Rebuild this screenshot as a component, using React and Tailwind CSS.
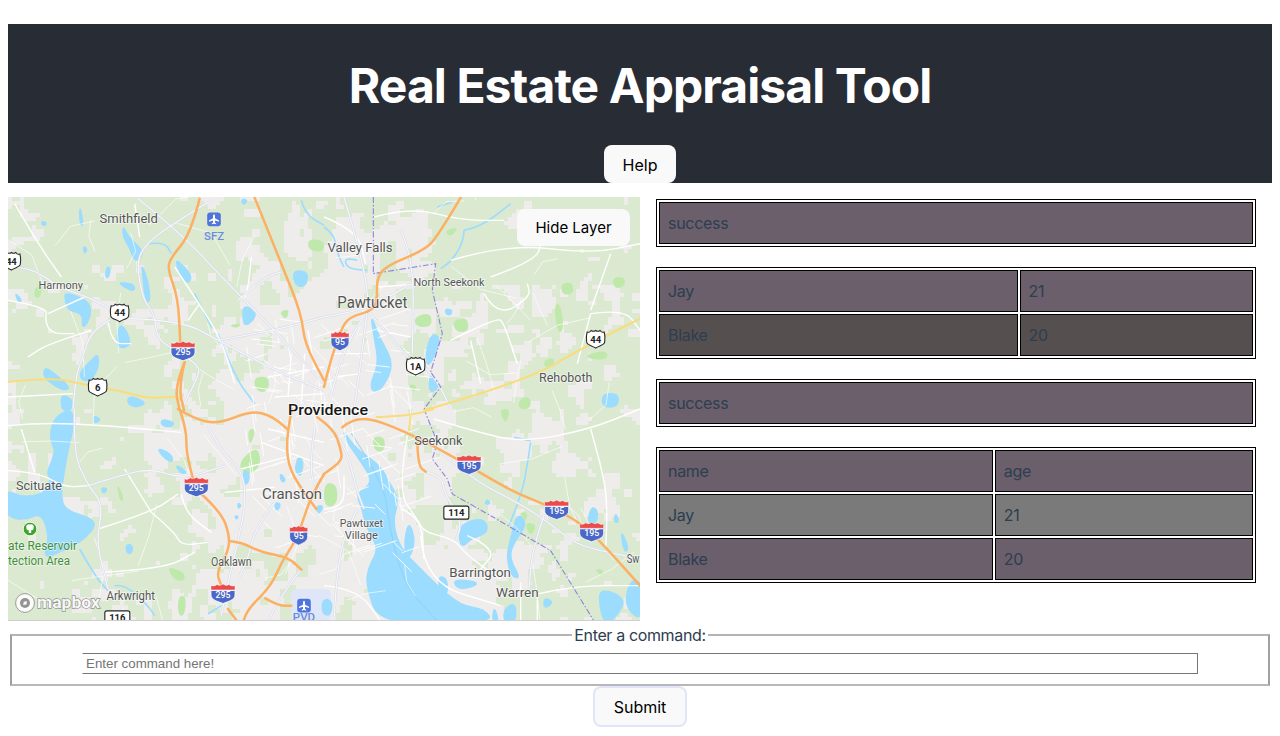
import React from "react";

const O = { a: [0, 0], b: [316, 0], c: [0, 212], d: [316, 212] };
const pts = (q, p) => p.map(([x, y]) => [O[q][0] + x / 3, O[q][1] + y / 3]);
function smooth(points, closed) {
  const n = points.length;
  if (n < 3) return "M" + points.map((p) => p.join(",")).join("L");
  let d = "";
  if (closed) {
    const m = (a, b) => [(a[0] + b[0]) / 2, (a[1] + b[1]) / 2];
    const s = m(points[n - 1], points[0]);
    d = `M${s[0]},${s[1]}`;
    for (let i = 0; i < n; i++) {
      const e = m(points[i], points[(i + 1) % n]);
      d += `Q${points[i][0]},${points[i][1]} ${e[0]},${e[1]}`;
    }
    return d + "Z";
  }
  d = `M${points[0][0]},${points[0][1]}`;
  for (let i = 1; i < n - 1; i++) {
    const ex = (points[i][0] + points[i + 1][0]) / 2;
    const ey = (points[i][1] + points[i + 1][1]) / 2;
    d += `Q${points[i][0]},${points[i][1]} ${ex},${ey}`;
  }
  d += `L${points[n - 1][0]},${points[n - 1][1]}`;
  return d;
}
const ln = (q, p) => smooth(pts(q, p), false);
const blob = (q, p) => smooth(pts(q, p), true);

function hash(x, y) {
  const s = Math.sin(x * 127.1 + y * 311.7) * 43758.5453;
  return s - Math.floor(s);
}
function vn(x, y, size) {
  const gx = x / size, gy = y / size;
  const ix = Math.floor(gx), iy = Math.floor(gy);
  const fx = gx - ix, fy = gy - iy;
  const u = fx * fx * (3 - 2 * fx), v = fy * fy * (3 - 2 * fy);
  const a = hash(ix, iy), b = hash(ix + 1, iy), c = hash(ix, iy + 1), e = hash(ix + 1, iy + 1);
  return a + (b - a) * u + (c - a) * v + (a - b - c + e) * u * v;
}
function greenPath() {
  let d = "";
  const cell = 4;
  for (let y = 0; y < 424; y += cell) {
    let start = -1;
    for (let x = 0; x <= 632; x += cell) {
      const city = Math.exp(-(((x - 325) / 105) ** 2 + ((y - 200) / 170) ** 2));
      const low = Math.exp(-(((x - 430) / 130) ** 2 + ((y - 400) / 100) ** 2));
      const mid = Math.exp(-(((x - 215) / 70) ** 2 + ((y - 330) / 100) ** 2));
      const t = 0.32 + 0.55 * city + 0.3 * low + 0.2 * mid;
      const n = 0.55 * vn(x, y, 24) + 0.45 * vn(x + 500, y + 300, 9);
      const on = x < 632 && n > t;
      if (on && start < 0) start = x;
      if (!on && start >= 0) {
        d += `M${start} ${y}H${x}V${y + cell}H${start}Z`;
        start = -1;
      }
    }
  }
  return d;
}
const GREEN = greenPath();

function streetPaths() {
  let city = "";
  for (let i = 0; i < 120; i++) {
    const r1 = hash(i, 1), r2 = hash(i, 2), r3 = hash(i, 3), r4 = hash(i, 4);
    const x = 235 + r1 * 165;
    const y = 120 + r2 * 240;
    const dirs = [[1, 0.12], [0.15, 1], [1, -0.35], [0.7, 0.7]];
    const dr = dirs[Math.floor(r3 * 4)];
    const L = 12 + r4 * 24;
    city += `M${x} ${y}L${x + dr[0] * L} ${y + dr[1] * L}`;
  }
  let outer = "";
  for (let i = 0; i < 60; i++) {
    const x = hash(i, 5) * 632, y = hash(i, 6) * 424;
    const a = hash(i, 7) * 6.28, L = 14 + hash(i, 8) * 24;
    const mx = x + Math.cos(a) * L, my = y + Math.sin(a) * L;
    const b = a + (hash(i, 9) - 0.5) * 1.6;
    outer += `M${x} ${y}L${mx} ${my}L${mx + Math.cos(b) * L} ${my + Math.sin(b) * L}`;
  }
  return { city, outer };
}
const STREETS = streetPaths();

const parks = [
  ["a", [[735, 540], [785, 538], [780, 585], [745, 585]]],
  ["a", [[812, 345], [845, 335], [835, 370]]],
  ["a", [[900, 125], [948, 130], [948, 165], [900, 160]]],
  ["a", [[660, 385], [700, 378], [690, 395]]],
  ["a", [[80, 270], [105, 265], [95, 305], [78, 300]]],
  ["b", [[360, 100], [405, 90], [380, 122]]],
  ["b", [[270, 360], [320, 345], [325, 390], [275, 390]]],
  ["b", [[385, 370], [430, 360], [435, 405], [395, 405]]],
  ["b", [[690, 320], [710, 320], [720, 400], [700, 410]]],
  ["b", [[710, 260], [745, 255], [750, 290], [715, 295]]],
  ["b", [[790, 470], [850, 460], [850, 490], [790, 485]]],
  ["b", [[590, 600], [620, 600], [620, 636], [580, 636]]],
  ["b", [[865, 240], [905, 240], [900, 270], [870, 275]]],
  ["b", [[660, 490], [690, 480], [690, 510], [660, 510]]],
  ["b", [[250, 560], [280, 565], [270, 590]]],
  ["c", [[325, 215], [350, 270], [335, 280]]],
  ["c", [[700, 150], [750, 110], [760, 170], [720, 200], [695, 180]]],
  ["c", [[475, 470], [530, 490], [530, 515], [500, 515]]],
  ["c", [[718, 60], [745, 60], [725, 115]]],
  ["c", [[510, 560], [535, 560], [530, 620], [510, 620]]],
  ["d", [[145, 80], [185, 85], [180, 130], [150, 125]]],
  ["d", [[600, 340], [640, 345], [620, 385]]],
  ["d", [[585, 310], [612, 310], [605, 340]]],
  ["d", [[810, 480], [838, 480], [835, 505]]],
  ["d", [[525, 0], [560, 0], [545, 50]]],
  ["d", [[0, 220], [40, 225], [40, 290], [0, 295]]],
];

const water = [
  ["a", [[345, 85], [360, 120], [395, 150], [405, 175], [380, 195], [365, 150], [345, 120]]],
  ["a", [[215, 20], [226, 85], [216, 85]]],
  ["a", [[500, 185], [530, 210], [552, 240], [540, 260], [520, 240]]],
  ["a", [[400, 200], [420, 250], [427, 315], [412, 310], [405, 240]]],
  ["a", [[170, 285], [240, 310], [250, 345], [235, 385], [222, 390], [225, 350], [180, 340], [172, 310]]],
  ["a", [[335, 380], [355, 400], [370, 445], [335, 455], [325, 430]]],
  ["a", [[270, 470], [272, 510], [250, 550], [220, 550], [215, 525], [250, 490]]],
  ["a", [[110, 510], [140, 530], [190, 575], [160, 580], [105, 540]]],
  ["a", [[160, 590], [195, 610], [190, 640], [160, 640]]],
  ["a", [[360, 595], [415, 615], [395, 630], [360, 625]]],
  ["a", [[860, 220], [900, 225], [895, 265], [870, 270], [855, 245]]],
  ["a", [[705, 320], [750, 350], [720, 385], [705, 380]]],
  ["a", [[225, 148], [238, 155], [230, 172]]],
  ["a", [[298, 208], [308, 215], [300, 245], [292, 235]]],
  ["a", [[335, 255], [380, 262], [378, 285], [340, 265]]],
  ["a", [[20, 285], [42, 310], [32, 318]]],
  ["a", [[100, 72], [118, 78], [105, 88]]],
  ["a", [[700, 5], [720, 10], [705, 25]]],
  ["b", [[140, 350], [165, 420], [205, 490], [195, 540], [160, 590], [135, 570], [165, 500], [150, 420]]],
  ["b", [[322, 410], [350, 420], [330, 480], [310, 510], [305, 470]]],
  ["b", [[320, 530], [350, 565], [320, 590], [315, 560]]],
  ["b", [[365, 335], [385, 340], [380, 355], [365, 350]]],
  ["b", [[835, 590], [885, 590], [880, 630], [835, 630]]],
  ["c", [[135, 30], [190, -5], [198, 50], [180, 120], [165, 210], [158, 260], [172, 305], [275, 335], [225, 395], [165, 425], [105, 450], [125, 385], [100, 310], [50, 335], [-10, 320], [-10, 240], [40, 265], [110, 255], [130, 210], [115, 190], [145, 130], [125, 90]]],
  ["c", [[255, 20], [280, 30], [260, 45]]],
  ["c", [[460, 30], [500, 40], [490, 55], [460, 50]]],
  ["c", [[445, 115], [490, 135], [495, 160], [470, 150]]],
  ["c", [[500, 165], [540, 190], [520, 195]]],
  ["c", [[705, 185], [725, 190], [720, 225], [705, 225]]],
  ["c", [[870, 145], [885, 150], [880, 205], [860, 185]]],
  ["c", [[815, 190], [835, 215], [820, 220]]],
  ["c", [[690, 280], [700, 290], [690, 300]]],
  ["c", [[800, 280], [820, 285], [805, 310]]],
  ["c", [[925, 290], [948, 290], [930, 320]]],
  ["c", [[280, 235], [300, 240], [285, 255]]],
  ["c", [[355, 405], [375, 410], [370, 435], [355, 430]]],
  ["c", [[680, 320], [692, 322], [685, 332]]],
  ["d", [[55, 60], [95, 120], [170, 170], [195, 220], [225, 270], [205, 340], [230, 420], [280, 470], [340, 530], [410, 590], [480, 600], [510, 640], [170, 650], [125, 530], [135, 470], [165, 420], [125, 350], [115, 300], [95, 255], [150, 220], [105, 150], [70, 100]]],
  ["d", [[410, 345], [480, 325], [495, 370], [440, 390], [415, 415], [405, 390]]],
  ["d", [[345, 500], [370, 510], [370, 560], [345, 540]]],
  ["d", [[390, 510], [470, 520], [430, 540], [395, 535]]],
  ["d", [[580, 310], [610, 345], [570, 400], [555, 445], [590, 510], [560, 500], [548, 440], [560, 390]]],
  ["d", [[255, 335], [275, 400], [250, 460], [240, 400]]],
  ["d", [[800, 295], [820, 300], [820, 340], [790, 350]]],
  ["d", [[-5, 570], [25, 575], [20, 620], [-5, 615]]],
  ["d", [[830, 540], [890, 560], [900, 590], [860, 640], [840, 640], [825, 580]]],
  ["d", [[660, 565], [690, 580], [660, 600]]],
  ["d", [[510, 590], [525, 640], [505, 640]]],
  ["d", [[540, 600], [575, 580], [575, 640], [540, 640]]],
  ["d", [[920, 510], [955, 520], [955, 640], [900, 590]]],
  ["d", [[890, 360], [915, 420], [900, 430]]],
  ["d", [[875, 310], [885, 340], [870, 340]]],
  ["d", [[490, 270], [500, 285], [482, 285]]],
];

const rivers = [
  ["a", [[560, 290], [600, 370], [612, 392]]],
  ["a", [[630, 410], [680, 540], [740, 620]]],
  ["a", [[880, 10], [890, 50], [948, 85]]],
  ["a", [[420, 140], [470, 135], [490, 170]]],
  ["b", [[420, 100], [420, 130], [385, 190], [350, 215]]],
  ["b", [[340, 30], [385, 15]]],
  ["b", [[420, 100], [470, 90], [560, 20]]],
  ["b", [[0, 90], [30, 110], [40, 170], [60, 210]]],
  ["b", [[100, 190], [60, 180], [70, 215], [130, 220]]],
  ["c", [[215, 420], [260, 500], [300, 545]]],
  ["c", [[320, 530], [350, 525], [420, 590], [440, 620]]],
  ["c", [[600, 615], [640, 590]]],
  ["d", [[620, 100], [605, 200], [590, 260], [555, 350]]],
  ["d", [[570, 85], [620, 95]]],
];

const major = [
  ["a", [[390, 5], [520, 110], [650, 250], [800, 400], [948, 560]]],
  ["a", [[610, 10], [480, 90], [415, 140], [385, 195], [405, 310], [440, 350], [445, 420], [490, 455], [575, 505], [570, 540], [520, 636]]],
  ["a", [[365, 365], [520, 370], [630, 430], [800, 520], [948, 580]]],
  ["a", [[630, 430], [800, 400], [948, 360]]],
  ["a", [[0, 210], [70, 210], [150, 270], [240, 300], [305, 335]]],
  ["a", [[305, 370], [250, 400], [225, 480], [205, 530], [195, 636]]],
  ["a", [[690, 310], [770, 240], [820, 225]]],
  ["b", [[60, 0], [120, 200], [135, 340]]],
  ["b", [[230, 100], [270, 180], [265, 470]]],
  ["b", [[0, 360], [130, 340], [260, 260]]],
  ["b", [[130, 340], [250, 480]]],
  ["b", [[130, 340], [60, 450], [20, 600]]],
  ["b", [[130, 340], [110, 500], [90, 636]]],
  ["b", [[270, 480], [330, 530], [380, 636]]],
  ["c", [[240, 230], [350, 195], [430, 180], [530, 210], [650, 170]]],
  ["c", [[200, 0], [195, 130], [240, 230], [275, 270], [280, 320], [265, 400], [300, 540]]],
  ["c", [[600, 50], [640, 130], [700, 180], [715, 270], [690, 400], [660, 520], [640, 620]]],
  ["c", [[920, 60], [900, 200], [940, 250]]],
  ["c", [[880, 480], [820, 560], [780, 636]]],
  ["c", [[800, 280], [740, 360], [720, 450], [690, 510]]],
  ["d", [[330, 110], [440, 210], [600, 290], [700, 360], [760, 410], [948, 450]]],
  ["d", [[310, 190], [355, 205], [360, 250], [415, 340], [395, 395]]],
  ["d", [[660, 320], [625, 420], [615, 540]]],
  ["d", [[30, 636], [40, 430], [100, 300]]],
  ["d", [[0, 40], [60, 90], [100, 250], [120, 300]]],
];

const minor = [
  ["a", [[20, 20], [90, 140], [160, 240]]],
  ["a", [[0, 310], [120, 330], [110, 370], [130, 410], [200, 410]]],
  ["a", [[120, 350], [230, 300]]],
  ["a", [[500, 210], [560, 300], [630, 410], [660, 490], [680, 560]]],
  ["a", [[575, 320], [540, 370]]],
  ["a", [[730, 180], [720, 290], [700, 310]]],
  ["a", [[300, 370], [310, 440], [370, 440]]],
  ["a", [[0, 600], [195, 590]]],
  ["a", [[250, 400], [120, 440], [60, 480]]],
  ["a", [[380, 20], [395, 120]]],
  ["a", [[850, 470], [840, 600]]],
  ["a", [[890, 470], [880, 620]]],
  ["a", [[780, 540], [948, 510]]],
  ["a", [[800, 600], [948, 590]]],
  ["a", [[900, 400], [920, 520]]],
  ["b", [[380, 190], [550, 140], [800, 170], [948, 140]]],
  ["b", [[500, 240], [640, 190], [650, 130]]],
  ["b", [[480, 290], [520, 360], [620, 300], [610, 260]]],
  ["b", [[380, 430], [520, 360], [540, 380], [580, 500]]],
  ["b", [[440, 430], [470, 560]]],
  ["b", [[800, 350], [900, 335], [948, 400]]],
  ["b", [[800, 350], [760, 500]]],
  ["b", [[860, 170], [800, 340]]],
  ["b", [[0, 60], [100, 100], [125, 200]]],
  ["b", [[150, 60], [260, 30], [410, 70], [540, 70]]],
  ["b", [[30, 470], [130, 470]]],
  ["b", [[30, 540], [110, 530]]],
  ["b", [[160, 400], [260, 420]]],
  ["b", [[300, 260], [160, 270]]],
  ["c", [[0, 185], [90, 190], [170, 235], [240, 230]]],
  ["c", [[0, 50], [100, 40], [300, 50], [520, 70]]],
  ["c", [[40, 60], [80, 190]]],
  ["c", [[650, 250], [800, 235]]],
  ["c", [[270, 360], [430, 310], [510, 255]]],
  ["c", [[430, 310], [500, 370], [520, 410], [600, 400]]],
  ["c", [[350, 180], [430, 310]]],
  ["c", [[520, 255], [530, 310], [610, 370]]],
  ["c", [[280, 490], [470, 480], [560, 430]]],
  ["c", [[780, 60], [948, 100]]],
  ["c", [[840, 40], [850, 200]]],
  ["c", [[760, 100], [948, 170]]],
  ["c", [[700, 180], [850, 140]]],
  ["d", [[250, 80], [220, 250], [280, 330], [300, 370], [390, 390], [430, 440], [530, 510]]],
  ["d", [[640, 555], [750, 530], [948, 530]]],
  ["d", [[330, 30], [460, 70], [600, 100], [800, 60], [948, 0]]],
  ["d", [[0, 530], [100, 540], [170, 636]]],
  ["d", [[590, 520], [590, 636]]],
  ["d", [[640, 560], [640, 636]]],
  ["d", [[230, 300], [290, 320], [300, 450]]],
  ["d", [[430, 380], [520, 420], [470, 480]]],
  ["d", [[800, 60], [840, 200], [850, 300], [845, 420]]],
  ["d", [[0, 300], [60, 300], [60, 200]]],
  ["d", [[290, 380], [300, 520], [530, 590]]],
];

const orange = [
  ["a", [[575, 5], [548, 110], [490, 180], [478, 215], [510, 300], [517, 440]]],
  ["a", [[530, 495], [500, 570], [515, 640]]],
  ["a", [[530, 495], [512, 570], [528, 640]]],
  ["a", [[740, 2], [820, 200], [880, 350], [890, 440], [948, 550]]],
  ["b", [[410, 2], [340, 120], [300, 160], [180, 210], [158, 250], [160, 300], [150, 340], [75, 360], [50, 400], [20, 490], [0, 570]]],
  ["c", [[515, 0], [535, 60], [535, 130], [555, 210]]],
  ["c", [[580, 255], [640, 310], [665, 380], [660, 430], [625, 490], [640, 530]]],
  ["c", [[660, 600], [690, 640]]],
  ["c", [[510, 0], [560, 30], [630, 45], [730, 5], [790, 20], [838, 60]]],
  ["c", [[852, 0], [835, 80], [840, 170], [880, 240], [925, 300]]],
  ["c", [[948, 195], [910, 260], [880, 350], [860, 400], [820, 460], [790, 530], [720, 600], [705, 640]]],
  ["c", [[668, 397], [700, 400], [760, 430], [840, 445], [880, 482]]],
  ["c", [[772, 568], [810, 590], [850, 590]]],
  ["d", [[-20, 25], [30, 60], [50, 120], [55, 155], [0, 195]]],
  ["d", [[55, 55], [85, 30], [150, 30], [270, 80], [400, 150], [560, 245], [660, 285], [770, 340], [850, 420], [948, 530]]],
  ["d", [[280, 100], [282, 170], [305, 188]]],
];

const yellow = [
  ["a", [[0, 555], [130, 540], [240, 565], [330, 580], [420, 605], [500, 598], [520, 610]]],
  ["b", [[300, 640], [600, 555], [790, 445], [948, 365]]],
  ["d", [[155, 25], [260, 20], [330, 0]]],
  ["d", [[260, 20], [255, 65]]],
];

const border = [
  ["b", [[148, 0], [148, 230], [335, 200], [325, 280], [355, 410], [320, 525], [350, 570], [300, 636]]],
  ["d", [[300, 0], [340, 100], [325, 150], [370, 210], [385, 255], [500, 320], [680, 425], [810, 636]]],
];

const labels = [
  ["a", 362, 62, "Smithfield", 175, 13.5],
  ["a", 158, 264, "Harmony", 133, 11.5],
  ["b", 108, 152, "Valley Falls", 195, 13],
  ["b", 375, 255, "North Seekonk", 213, 11.5],
  ["b", 145, 316, "Pawtucket", 210, 16],
  ["b", 725, 541, "Rehoboth", 160, 12.5],
  ["c", 93, 230, "Scituate", 138, 12.5],
  ["c", 852, 254, "Cranston", 180, 15.5],
  ["c", 670, 457, "Oaklawn", 122, 12],
  ["c", 368, 560, "Arkwright", 145, 12.5],
  ["d", 343, 93, "Seekonk", 145, 13],
  ["d", 112, 341, "Pawtuxet", 130, 11.5],
  ["d", 112, 379, "Village", 100, 11.5],
  ["d", 468, 490, "Barrington", 185, 13.5],
  ["d", 580, 550, "Warren", 128, 13.5],
  ["d", 927, 447, "Sw", 38, 13.5],
];

function Interstate({ q, x, y, n, narrow }) {
  const [px, py] = pts(q, [[x, y]])[0];
  const s = narrow ? 0.75 : 1;
  return (
    <g transform={`translate(${px},${py}) scale(${s},1)`}>
      <path d="M-12,-2.5H12V2C12,7 5,8.5 0,10.5C-5,8.5 -12,7 -12,2Z" fill="#4a68c8" stroke="#fff" strokeWidth="0.8" />
      <path d="M-12,-3V-7.5Q-9,-6 -6,-8.5Q-3,-6.5 0,-9Q3,-6.5 6,-8.5Q9,-6 12,-7.5V-3Z" fill="#ea4b4b" stroke="#fff" strokeWidth="0.5" />
      <text x="0" y="4.5" textAnchor="middle" transform={`scale(${1 / s},1)`} className="[font-family:Roboto,sans-serif]" fontSize="9.5" fontWeight="500" fill="#fff" textLength={narrow ? 10 : 15} lengthAdjust="spacingAndGlyphs">{n}</text>
    </g>
  );
}
function UsShield({ q, x, y, n }) {
  const [px, py] = pts(q, [[x, y]])[0];
  return (
    <g transform={`translate(${px},${py})`}>
      <path d="M-8.5,-7Q-6,-6 -4.5,-8.5Q-2,-7 0,-8.5Q2,-7 4.5,-8.5Q6,-6 8.5,-7C10,-2 9,1 9,3C9,6 4,6.5 0,9C-4,6.5 -9,6 -9,3C-9,1 -10,-2 -8.5,-7Z" fill="#fff" stroke="#2b2b2b" strokeWidth="1.1" />
      <text x="0" y="3.8" textAnchor="middle" className="[font-family:Roboto,sans-serif]" fontSize="9.5" fontWeight="700" fill="#222">{n}</text>
    </g>
  );
}
function RectShield({ q, x, y, n }) {
  const [px, py] = pts(q, [[x, y]])[0];
  return (
    <g transform={`translate(${px},${py})`}>
      <rect x="-12.5" y="-6.5" width="25" height="13" rx="2" fill="#fff" stroke="#222" strokeWidth="1.1" />
      <text x="0" y="3.6" textAnchor="middle" className="[font-family:Roboto,sans-serif]" fontSize="9.5" fontWeight="700" fill="#222">{n}</text>
    </g>
  );
}
function AirportIcon({ q, x, y }) {
  const [px, py] = pts(q, [[x, y]])[0];
  return (
    <g transform={`translate(${px},${py})`}>
      <rect x="-6.8" y="-6.8" width="13.6" height="13.6" rx="3" fill="#4f74dc" />
      <path d="M0,-5Q1,-5 1,-3V-1L5,1.2V2.4L1,1.2V3.2L2.2,4.2V5L0,4.3L-2.2,5V4.2L-1,3.2V1.2L-5,2.4V1.2L-1,-1V-3Q-1,-5 0,-5Z" fill="#fff" />
    </g>
  );
}

const Mf = "[font-family:Roboto,sans-serif]";

function MapArt() {
  return (
    <svg viewBox="0 0 632 424" className="block w-full h-full">
      <rect width="632" height="424" fill="#efedeb" />
      <defs>
        <filter id="soft" x="0" y="0" width="100%" height="100%"><feGaussianBlur stdDeviation="0.7" /></filter>
      </defs>
      <g filter="url(#soft)">
        <path d={GREEN} fill="#dae9d0" />
        {parks.map(([q, p], i) => <path key={i} d={blob(q, p)} fill="#bfe8ab" />)}
      </g>
      <rect x="283" y="392" width="40" height="32" rx="6" fill="#dfe6f7" />
      {water.map(([q, p], i) => <path key={i} d={blob(q, p)} fill="#9bdcff" stroke="#9bdcff" strokeWidth="1.5" strokeLinejoin="round" />)}
      <path d={ln("d", [[80, 70], [180, 220], [195, 350], [240, 530], [340, 636]])} fill="none" stroke="#8fd0f6" strokeWidth="1" />
      {rivers.map(([q, p], i) => <path key={i} d={ln(q, p)} fill="none" stroke="#9bdcff" strokeWidth="1.6" />)}
      <path d={STREETS.outer} fill="none" stroke="#ffffff" strokeWidth="0.9" strokeOpacity="0.7" />
      <path d={STREETS.city} fill="none" stroke="#ffffff" strokeWidth="1" strokeOpacity="0.85" />
      {minor.map(([q, p], i) => <path key={i} d={ln(q, p)} fill="none" stroke="#ffffff" strokeWidth="1.4" />)}
      {major.map(([q, p], i) => <path key={i} d={ln(q, p)} fill="none" stroke="#d9dde9" strokeWidth="2.4" />)}
      {major.map(([q, p], i) => <path key={i} d={ln(q, p)} fill="none" stroke="#f7f8fb" strokeWidth="1.1" />)}
      {border.map(([q, p], i) => <path key={i} d={smooth(pts(q, p).flatMap((a) => [a, a]), false)} fill="none" stroke="#8a86dc" strokeWidth="1.1" strokeDasharray="6 2 1.5 2" />)}
      {yellow.map(([q, p], i) => <path key={i} d={ln(q, p)} fill="none" stroke="#f9dc7c" strokeWidth="2" />)}
      {orange.map(([q, p], i) => <path key={i} d={ln(q, p)} fill="none" stroke="#fbb063" strokeWidth="2.5" strokeLinecap="round" />)}

      {labels.map(([q, x, y, t, w, fs], i) => {
        const [px, py] = pts(q, [[x, y]])[0];
        return (
          <text key={i} x={px} y={py + fs * 0.36} textAnchor="middle" className={Mf} fontSize={fs} fill="#555" stroke="#fff" strokeWidth="1.6" strokeOpacity="0.7" paintOrder="stroke" textLength={w / 3} lengthAdjust="spacingAndGlyphs">{t}</text>
        );
      })}
      <text x="280" y="218" textAnchor="start" className={Mf} fontSize="15" fontWeight="500" fill="#161616" stroke="#fff" strokeWidth="2" strokeOpacity="0.8" paintOrder="stroke" textLength="80" lengthAdjust="spacingAndGlyphs">Providence</text>
      <text x="206" y="43" textAnchor="middle" className={Mf} fontSize="11.5" fontWeight="500" fill="#6c8ae0" textLength="20" lengthAdjust="spacingAndGlyphs">SFZ</text>
      <text x="69" y="353" textAnchor="end" className={Mf} fontSize="12" fill="#3f8f3a" stroke="#fff" strokeWidth="1.4" strokeOpacity="0.6" paintOrder="stroke" textLength="69" lengthAdjust="spacingAndGlyphs">ate Reservoir</text>
      <text x="62" y="368" textAnchor="end" className={Mf} fontSize="12" fill="#3f8f3a" stroke="#fff" strokeWidth="1.4" strokeOpacity="0.6" paintOrder="stroke" textLength="62" lengthAdjust="spacingAndGlyphs">tection Area</text>
      <text x="296" y="424" textAnchor="middle" className={Mf} fontSize="11.5" fontWeight="500" fill="#6c8ae0">PVD</text>

      <AirportIcon q="a" x={618} y={67} />
      <AirportIcon q="c" x={888} y={590} />

      <g transform="translate(22,332)">
        <circle r="6.8" fill="#3aa62a" stroke="#fff" strokeWidth="0.8" />
        <path d="M0,-4.4A2.6,2.6 0 0 1 3.6,-1A2,2 0 0 1 1.2,1.2V4H-1.2V1.2A2,2 0 0 1 -3.6,-1A2.6,2.6 0 0 1 0,-4.4Z" fill="#fff" />
      </g>

      {[["a", 525, 460, "295"], ["c", 565, 232, "295"], ["c", 645, 552, "295"], ["d", 435, 165, "195"], ["d", 698, 300, "195"], ["d", 803, 367, "195"]].map(([q, x, y, n], i) => (
        <Interstate key={i} q={q} x={x} y={y} n={n} />
      ))}
      <Interstate q="b" x={48} y={430} n="95" narrow />
      <Interstate q="c" x={872} y={377} n="95" narrow />
      <UsShield q="a" x={335} y={347} n="44" />
      <UsShield q="a" x={269} y={570} n="6" />
      <UsShield q="a" x={10} y={192} n="44" />
      <UsShield q="b" x={815} y={426} n="44" />
      <UsShield q="b" x={275} y={507} n="1A" />
      <RectShield q="c" x={328} y={625} n="116" />
      <RectShield q="d" x={397} y={311} n="114" />

      <g transform="translate(17,406)">
        <circle r="9.4" fill="#fff" fillOpacity="0.9" stroke="#777" strokeOpacity="0.7" strokeWidth="1" />
        <circle r="5" fill="#888" fillOpacity="0.9" />
        <path d="M-1.8,2L-1.2,-1.2L2,-1.8L1.4,1.4Z" fill="#fff" />
      </g>
      <text x="29" y="411" className={Mf} fontSize="16.5" fontWeight="700" fill="#fff" fillOpacity="0.92" stroke="#777" strokeOpacity="0.75" strokeWidth="1.3" paintOrder="stroke" textLength="63" lengthAdjust="spacingAndGlyphs">mapbox</text>
      <rect x="0" y="423" width="632" height="1" fill="#cfcfcf" />
    </svg>
  );
}

const Cell = ({ bg, w, children }) => (
  <td className={`border border-black p-2 text-[16px] leading-6 tracking-[-0.3px] ${bg} ${w || ""}`}>{children}</td>
);

function DataTable({ rows, widths, className }) {
  return (
    <table className={`w-[600px] ml-4 border border-black border-separate [border-spacing:2px] text-[#2c3e50] ${className || ""}`}>
      <tbody>
        {rows.map(([bg, cells], i) => (
          <tr key={i}>
            {cells.map((c, j) => (
              <Cell key={j} bg={bg} w={widths ? widths[j] : ""}>{c}</Cell>
            ))}
          </tr>
        ))}
      </tbody>
    </table>
  );
}

export default function App() {
  return (
    <div className="px-2 h-[736px] overflow-hidden bg-white [font-family:Inter,sans-serif] text-[16px] text-[#2c3e50]">
      <header className="mt-6 h-[159px] bg-[#282c34] flex flex-col items-center">
        <h1 className="mt-[33px] text-[48px] leading-[58px] font-bold tracking-[-0.92px] text-white">Real Estate Appraisal Tool</h1>
        <button className="mt-[30px] w-[72px] h-[38px] pt-px rounded-lg bg-[#f9f9f9] text-black font-normal">Help</button>
      </header>

      <main className="flex mt-[14px]">
        <div className="relative w-[632px] h-[424px] shrink-0 overflow-hidden">
          <MapArt />
          <button className="absolute top-3 right-[10px] w-[113px] h-[37px] pt-px rounded-lg bg-[#f9f9f9] text-black font-normal text-[15px]">Hide Layer</button>
        </div>
        <div className="flex flex-col gap-5 pt-[2px]">
          <DataTable rows={[["bg-[#6b5f6c]", ["success"]]]} />
          <DataTable widths={["w-[361px]", "w-[235px]"]} rows={[["bg-[#6b5f6c]", ["Jay", "21"]], ["bg-[#55504f]", ["Blake", "20"]]]} />
          <DataTable rows={[["bg-[#6b5f6c]", ["success"]]]} />
          <DataTable widths={["w-[336px]", "w-[260px]"]} rows={[["bg-[#6b5f6c]", ["name", "age"]], ["bg-[#7a7a7a]", ["Jay", "21"]], ["bg-[#6b5f6c]", ["Blake", "20"]]]} />
        </div>
      </main>

      <form onSubmit={(e) => e.preventDefault()} className="flex flex-col items-center">
        <fieldset className="self-stretch mx-[2px] mt-[2px] pb-[10px] pt-[6px] border-2 border-t-[#b4b4b4] border-b-[#b8b8b8] border-x-[#a0a0a0] flex flex-col items-center">
          <legend className="mx-auto px-0.5 leading-6 tracking-[-0.36px]">Enter a command:</legend>
          <input
            placeholder="Enter command here!"
            className="block w-[1116px] h-[21px] px-[3px] border border-[#767676] border-l-white text-[13.33px] [font-family:'Liberation_Sans',Arial,sans-serif] placeholder:text-[#757575] bg-white outline-none"
          />
        </fieldset>
        <button className="w-[94px] h-[41px] rounded-lg border-2 border-[#e2e4fa] bg-[#f9f9f9] text-black font-normal">Submit</button>
      </form>
    </div>
  );
}
